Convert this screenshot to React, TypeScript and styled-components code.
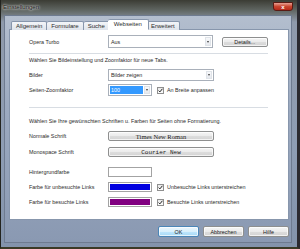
import React from 'react'
import styled, { createGlobalStyle } from 'styled-components'

const GlobalStyle = createGlobalStyle`
  html, body {
    margin: 0;
    padding: 0;
    background: #2a2b25;
  }
  body {
    font-family: "Liberation Sans", Arial, sans-serif;
    color: #2b2b2b;
  }
`

const Window = styled.div`
  width: 300px;
  height: 249px;
  box-sizing: border-box;
  display: flex;
  flex-direction: column;
  background: linear-gradient(#3b3c34 0px, #5f6561 10px, #8f9aab 22px, #8e9db4 60%, #8393ab 100%);
  border-left: 1px solid #23241f;
  border-right: 3px solid #2b2a30;
  border-bottom: 2px solid #3b3a26;
  padding: 0 5px 4px 3px;
`

const TitleBar = styled.div`
  height: 15px;
  display: flex;
  align-items: flex-start;
  justify-content: space-between;
  margin: 0 -1px 0 -3px;
  padding: 0 0 0 2px;
`

const Title = styled.span`
  font-size: 6px;
  line-height: 14px;
  color: #141414;
  text-shadow: 0 0 3px rgba(255, 255, 255, 0.95), 0 0 2px rgba(255, 255, 255, 0.9);
`

const CloseButton = styled.div`
  width: 18px;
  height: 7px;
  margin-top: 2px;
  border: 1px solid #5a1b14;
  border-radius: 0 0 3px 3px;
  background: linear-gradient(#e8a194, #c9452f 50%, #b5281a);
  display: flex;
  align-items: center;
  justify-content: center;
  color: #fff;
  font-size: 6px;
  font-weight: bold;
  line-height: 1;
`

const Client = styled.div`
  flex: 1;
  display: flex;
  flex-direction: column;
  border: 1px solid #6e7b90;
  padding: 4px 2px 5px 4px;
  background: linear-gradient(#b3bece, #9caac0 40%, #8a99b2 100%);
`

const TabStrip = styled.div`
  display: flex;
  align-items: flex-end;
  height: 10px;
  padding-left: 2px;
  margin-bottom: -1px;
  position: relative;
  z-index: 1;
`

const Tab = styled.div<{ $active?: boolean }>`
  box-sizing: border-box;
  height: ${p => (p.$active ? 11 : 9)}px;
  padding: 0 ${p => (p.$active ? 6 : 4)}px;
  margin: 0 ${p => (p.$active ? -2 : 0)}px 0 ${p => (p.$active ? -2 : 0)}px;
  border: 1px solid #8796ac;
  border-bottom: ${p => (p.$active ? '1px solid #fff' : 'none')};
  border-radius: 2px 2px 0 0;
  background: ${p => (p.$active ? '#fff' : 'linear-gradient(#f3f5f8, #dfe4eb)')};
  font-size: 6px;
  line-height: ${p => (p.$active ? 9 : 8)}px;
  color: #2b2b2b;
  position: relative;
  z-index: ${p => (p.$active ? 2 : 1)};
  & + & {
    border-left: none;
  }
`

const Panel = styled.div`
  flex: 1;
  display: flex;
  flex-direction: column;
  background: #fff;
  border: 1px solid #8796ac;
  padding: 5px 20px 0 19px;
`

const Row = styled.div<{ $top?: number }>`
  display: flex;
  align-items: center;
  margin-top: ${p => p.$top ?? 0}px;
  font-size: 5.4px;
`

const Label = styled.span`
  width: 79px;
  flex: none;
  color: #2b2b2b;
`

const Divider = styled.div<{ $top: number }>`
  height: 1px;
  background: #d8dde3;
  margin-top: ${p => p.$top}px;
`

const Hint = styled.div<{ $top: number }>`
  font-size: 5.4px;
  line-height: 8px;
  margin-top: ${p => p.$top}px;
  color: #2b2b2b;
`

const Select = styled.div<{ $width: number; $height?: number }>`
  box-sizing: border-box;
  width: ${p => p.$width}px;
  height: ${p => p.$height ?? 12}px;
  border: 1px solid #a9b0ba;
  background: #fff;
  display: flex;
  align-items: stretch;
  padding: 1px;
`

const SelectText = styled.span<{ $selected?: boolean }>`
  flex: 1;
  display: flex;
  align-items: center;
  padding-left: 1px;
  font-size: 5.4px;
  color: ${p => (p.$selected ? '#fff' : '#2b2b2b')};
  background: ${p => (p.$selected ? '#3399ff' : 'transparent')};
`

const ArrowBox = styled.span`
  width: 6px;
  margin-left: 1px;
  box-sizing: border-box;
  border: 1px solid #dfe3e8;
  background: linear-gradient(#f7f8fa, #e6e9ee);
  display: flex;
  align-items: center;
  justify-content: center;
  &::after {
    content: '';
    border-left: 1.5px solid transparent;
    border-right: 1.5px solid transparent;
    border-top: 2px solid #3c3c3c;
  }
`

const Button = styled.div<{ $width: number; $font?: string; $size?: number; $default?: boolean; $gap?: number }>`
  box-sizing: border-box;
  width: ${p => p.$width}px;
  height: ${p => (p.$default !== undefined ? 11 : 10)}px;
  margin-left: ${p => p.$gap ?? 0}px;
  border: 1px solid ${p => (p.$default ? '#4a86b8' : '#8e8f8f')};
  border-radius: 2px;
  background: ${p =>
    p.$default
      ? 'linear-gradient(#eaf6fd, #d9f0fc 50%, #bee6fd 51%, #a7d9f5)'
      : 'linear-gradient(#f5f5f5, #ebebeb 50%, #dddddd 51%, #d3d3d3)'};
  box-shadow: inset 0 0 0 1px rgba(255, 255, 255, 0.7);
  display: flex;
  align-items: center;
  justify-content: center;
  font-family: ${p => p.$font ?? '"Liberation Sans", Arial, sans-serif'};
  font-size: ${p => p.$size ?? 5.4}px;
  color: #222;
`

const Swatch = styled.div<{ $color: string }>`
  box-sizing: border-box;
  width: 44px;
  height: 10px;
  border: 1px solid #a3a3a3;
  background: ${p => p.$color};
  box-shadow: inset 0 0 0 1px #fff;
`

const CheckGroup = styled.span`
  display: flex;
  align-items: center;
  gap: 3px;
  margin-left: 5px;
`

const CheckBox = styled.span`
  box-sizing: border-box;
  width: 7px;
  height: 7px;
  border: 1px solid #8f8f8f;
  background: linear-gradient(#e9e9e9, #fcfcfc);
  display: flex;
  align-items: center;
  justify-content: center;
`

const ButtonBar = styled.div`
  display: flex;
  justify-content: flex-end;
  gap: 4px;
  margin-top: 6px;
`

function Check({ label }: { label: string }) {
  return (
    <CheckGroup>
      <CheckBox>
        <svg width="5" height="5" viewBox="0 0 5 5">
          <path d="M0.6 2.6 L1.9 3.9 L4.4 0.8" fill="none" stroke="#262626" strokeWidth="1" />
        </svg>
      </CheckBox>
      <span>{label}</span>
    </CheckGroup>
  )
}

const tabs = ['Allgemein', 'Formulare', 'Suche', 'Webseiten', 'Erweitert']

export default function App() {
  return (
    <>
      <GlobalStyle />
      <Window>
        <TitleBar>
          <Title>Einstellungen</Title>
          <CloseButton>x</CloseButton>
        </TitleBar>
        <Client>
          <TabStrip>
            {tabs.map(t => (
              <Tab key={t} $active={t === 'Webseiten'}>
                {t}
              </Tab>
            ))}
          </TabStrip>
          <Panel>
            <Row>
              <Label>Opera Turbo</Label>
              <Select $width={106} $height={13}>
                <SelectText>Aus</SelectText>
                <ArrowBox />
              </Select>
              <Button $width={47} $gap={9}>
                Details...
              </Button>
            </Row>
            <Divider $top={5} />
            <Hint $top={2}>Wählen Sie Bildeinstellung und Zoomfaktor für neue Tabs.</Hint>
            <Row $top={5}>
              <Label>Bilder</Label>
              <Select $width={106}>
                <SelectText>Bilder zeigen</SelectText>
                <ArrowBox />
              </Select>
            </Row>
            <Row $top={3}>
              <Label>Seiten-Zoomfaktor</Label>
              <Select $width={44}>
                <SelectText $selected>100</SelectText>
                <ArrowBox />
              </Select>
              <Check label="An Breite anpassen" />
            </Row>
            <Divider $top={11} />
            <Hint $top={9}>Wählen Sie Ihre gewünschten Schriften u. Farben für Seiten ohne Formatierung.</Hint>
            <Row $top={6}>
              <Label>Normale Schrift</Label>
              <Button $width={106} $font='"Liberation Serif", "Times New Roman", serif' $size={6.5}>
                Times New Roman
              </Button>
            </Row>
            <Row $top={6}>
              <Label>Monospace Schrift</Label>
              <Button $width={106} $font='"Liberation Mono", "Courier New", monospace' $size={6}>
                Courier New
              </Button>
            </Row>
            <Row $top={10}>
              <Label>Hintergrundfarbe</Label>
              <Swatch $color="#ffffff" />
            </Row>
            <Row $top={5}>
              <Label>Farbe für unbesuchte Links</Label>
              <Swatch $color="#0000e0" />
              <Check label="Unbesuchte Links unterstreichen" />
            </Row>
            <Row $top={5}>
              <Label>Farbe für besuchte Links</Label>
              <Swatch $color="#800080" />
              <Check label="Besuchte Links unterstreichen" />
            </Row>
          </Panel>
          <ButtonBar>
            <Button $width={41} $default>OK</Button>
            <Button $width={41} $default={false}>Abbrechen</Button>
            <Button $width={41} $default={false}>Hilfe</Button>
          </ButtonBar>
        </Client>
      </Window>
    </>
  )
}
